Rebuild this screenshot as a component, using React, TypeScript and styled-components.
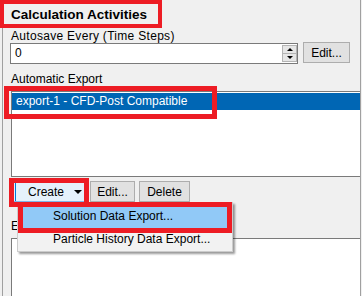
import React from "react";
import styled, { createGlobalStyle } from "styled-components";

const GlobalStyle = createGlobalStyle`
  html, body {
    margin: 0;
    padding: 0;
    background: #f0f0f0;
  }
  body {
    font-family: "Liberation Sans", Arial, sans-serif;
    font-size: 12px;
    color: #000;
  }
`;

const Page = styled.div`
  position: relative;
  width: 362px;
  height: 296px;
  overflow: hidden;
  background: #f0f0f0;
`;

const Frame = styled.div`
  display: flex;
  flex-direction: column;
  box-sizing: border-box;
  margin-left: 2px;
  width: 359px;
  height: 100%;
  border-left: 1px solid #a0a0a0;
  border-right: 1px solid #a0a0a0;
`;

const Title = styled.h1`
  box-sizing: border-box;
  margin: 0 0 0 -3px;
  width: 162px;
  height: 28px;
  padding: 2px 0 0 7px;
  border: 4px solid #ed1c24;
  background: #f0f0f0;
  font-size: 13.5px;
  font-weight: bold;
  line-height: 18px;
  white-space: nowrap;
`;

const Label = styled.div<{ $top: number; $spacing?: number }>`
  margin: ${(p) => p.$top}px 0 0 8px;
  line-height: 16px;
  letter-spacing: ${(p) => p.$spacing ?? 0}px;
  white-space: nowrap;
`;

const InputRow = styled.div`
  display: flex;
  align-items: flex-start;
  gap: 5px;
  margin: -2px 0 0 7px;
`;

const SpinField = styled.div`
  display: flex;
  box-sizing: border-box;
  width: 288px;
  height: 21px;
  margin-top: 1px;
  border: 1px solid #7a7a7a;
  background: #fff;
`;

const FieldText = styled.div`
  flex: 1;
  padding-left: 4px;
  line-height: 19px;
`;

const SpinBox = styled.div`
  display: flex;
  flex-direction: column;
  box-sizing: border-box;
  width: 15px;
  height: 17px;
  margin-top: 1px;
  border: 1px solid #b4b4b4;
  background: #e6e6e6;
`;

const SpinHalf = styled.div<{ $down?: boolean }>`
  flex: 1;
  display: flex;
  align-items: center;
  justify-content: center;
  border-top: ${(p) => (p.$down ? "1px solid #b4b4b4" : "none")};
  &::after {
    content: "";
    border-left: 3px solid transparent;
    border-right: 3px solid transparent;
    ${(p) =>
      p.$down ? "border-top: 3px solid #000;" : "border-bottom: 3px solid #000;"}
  }
`;

const Button = styled.button<{ $w: number; $h?: number }>`
  box-sizing: border-box;
  width: ${(p) => p.$w}px;
  height: ${(p) => p.$h ?? 21}px;
  padding: 0;
  border: 1px solid #adadad;
  background: #e1e1e1;
  font-family: inherit;
  font-size: 12px;
  color: #000;
  line-height: 1;
`;

const CreateButton = styled(Button)`
  display: flex;
  align-items: center;
  padding-left: 16px;
  border-color: #7eb4ea;
  background: #e5f1fb;
  box-shadow: inset 3px 0 0 #e5f1fb, inset 4px 0 0 #0078d7;
  &::after {
    content: "";
    margin-left: 10px;
    border-left: 4px solid transparent;
    border-right: 4px solid transparent;
    border-top: 4px solid #000;
  }
`;

const ListBox = styled.div`
  box-sizing: border-box;
  height: 86px;
  margin: 4px 0 0 8px;
  padding-top: 1px;
  border: 1px solid #7a7a7a;
  border-right: none;
  background: #fff;
`;

const ListRow = styled.div<{ $selected?: boolean }>`
  height: 17px;
  padding-left: 4px;
  line-height: 17px;
  white-space: nowrap;
  background: ${(p) => (p.$selected ? "#0066b4" : "transparent")};
  color: ${(p) => (p.$selected ? "#fff" : "#000")};
`;

const ButtonRow = styled.div`
  display: flex;
  gap: 4px;
  margin: 4px 0 0 8px;
`;

const WhiteBox = styled.div`
  flex: 1;
  margin: 4px 0 0 8px;
  border-top: 1px solid #7a7a7a;
  border-left: 1px solid #7a7a7a;
  background: #fff;
`;

const Menu = styled.div`
  position: absolute;
  left: 17px;
  top: 202px;
  box-sizing: border-box;
  width: 216px;
  height: 50px;
  padding-top: 2px;
  border: 1px solid #cccccc;
  background: #f2f2f2;
  box-shadow: 2px 2px 2px rgba(0, 0, 0, 0.4);
  z-index: 2;
`;

const MenuItem = styled.div<{ $active?: boolean }>`
  height: 23px;
  margin: 0 2px;
  padding-left: 33px;
  line-height: 23px;
  white-space: nowrap;
  background: ${(p) => (p.$active ? "#91c9f7" : "transparent")};
`;

const Mark = styled.div`
  position: absolute;
  box-sizing: border-box;
  border: 5px solid #ed1c24;
  z-index: 3;
  pointer-events: none;
`;

const marks = [
  { left: 4, top: 86, width: 213, height: 33 },
  { left: 9, top: 178, width: 80, height: 29 },
  { left: 18, top: 202, width: 214, height: 31 },
];

export default function App() {
  return (
    <>
      <GlobalStyle />
      <Page>
        <Frame>
          <Title>Calculation Activities</Title>
          <Label $top={0} $spacing={0.3}>
            Autosave Every (Time Steps)
          </Label>
          <InputRow>
            <SpinField>
              <FieldText>0</FieldText>
              <SpinBox>
                <SpinHalf />
                <SpinHalf $down />
              </SpinBox>
            </SpinField>
            <Button $w={47}>Edit...</Button>
          </InputRow>
          <Label $top={7}>Automatic Export</Label>
          <ListBox>
            <ListRow $selected>export-1 - CFD-Post Compatible</ListRow>
          </ListBox>
          <ButtonRow>
            <CreateButton $w={75}>Create</CreateButton>
            <Button $w={45}>Edit...</Button>
            <Button $w={51}>Delete</Button>
          </ButtonRow>
          <Label $top={16}>Execute Commands</Label>
          <WhiteBox />
        </Frame>
        <Menu>
          <MenuItem $active>Solution Data Export...</MenuItem>
          <MenuItem>Particle History Data Export...</MenuItem>
        </Menu>
        {marks.map((m, i) => (
          <Mark key={i} style={m} />
        ))}
      </Page>
    </>
  );
}
